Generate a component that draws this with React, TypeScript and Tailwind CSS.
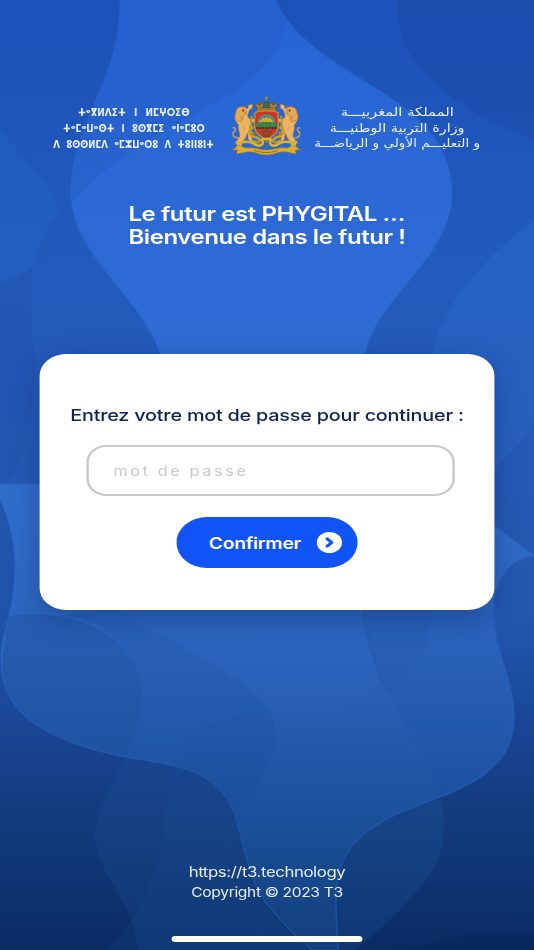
import { ChevronRight } from 'lucide-react';

const tifinagh = [
  { text: 'ⵜⴰⴳⵍⴷⵉⵜ ⵏ ⵍⵎⵖⵔⵉⴱ', spacing: '[word-spacing:6px] scale-x-[0.71]' },
  { text: 'ⵜⴰⵎⴰⵡⴰⵙⵜ ⵏ ⵓⵙⴳⵎⵉ ⴰⵏⴰⵎⵓⵔ', spacing: '[word-spacing:5px] scale-x-[0.69]' },
  { text: 'ⴷ ⵓⵙⵙⵍⵎⴷ ⴰⵎⵣⵡⴰⵔⵓ ⴷ ⵜⵓⵏⵏⵓⵏⵜ', spacing: '[word-spacing:4px] scale-x-[0.68]' },
];

const arabic = [
  { text: 'المملكة المغربيـــة', size: 'text-[12.3px]' },
  { text: 'وزارة التربية الوطنيـــة', size: 'text-[12px]' },
  { text: 'و التعليـــم الأولي و الرياضـــة', size: 'text-[11.3px]' },
];

function Backdrop() {
  return (
    <svg viewBox="0 0 534 950" preserveAspectRatio="none" className="absolute inset-0 h-full w-full">
      <defs>
        <linearGradient id="deep" gradientUnits="userSpaceOnUse" x1="0" y1="0" x2="0" y2="950">
          <stop offset="0" stopColor="#1c52b9" />
          <stop offset="0.3" stopColor="#235abd" />
          <stop offset="0.55" stopColor="#2659b3" />
          <stop offset="0.65" stopColor="#2257b0" />
          <stop offset="0.78" stopColor="#184390" />
          <stop offset="0.9" stopColor="#103776" />
          <stop offset="1" stopColor="#092b63" />
        </linearGradient>
        <linearGradient id="light" gradientUnits="userSpaceOnUse" x1="0" y1="0" x2="0" y2="950">
          <stop offset="0" stopColor="#2664d6" />
          <stop offset="0.35" stopColor="#306cd4" />
          <stop offset="0.55" stopColor="#316cca" />
          <stop offset="0.68" stopColor="#2c65be" />
          <stop offset="0.8" stopColor="#2157a7" />
          <stop offset="0.9" stopColor="#184b91" />
          <stop offset="1" stopColor="#123e7c" />
        </linearGradient>
      </defs>
      <rect width="534" height="950" fill="url(#deep)" />

      {/* Upper left folds */}
      <path d="M0 130C30 165 61 195 62 225C60 252 30 273 0 284Z" fill="#2f6dd0" opacity="0.18" />
      <path d="M0 284C30 273 61 252 61 225V212C40 235 32 260 32 290C30 340 38 360 34 385C30 440 20 472 0 487Z" fill="#1e47a0" opacity="0.2" />

      {/* Upper right folds */}
      <path d="M397 0C396 50 425 82 470 110C490 122 515 132 534 141V0Z" fill="#1b47a6" opacity="0.42" />
      <path d="M534 220C500 245 470 275 452 305C434 335 430 355 430 380V470H494C510 450 530 440 534 418Z" fill="#3474d4" opacity="0.24" />

      {/* Central ribbon, behind the card and down to the bottom */}
      <path
        d="M120 0C121 80 72 120 71 190C70 260 150 300 162 362L100 484L0 484V500C14 530 18 560 12 600C8 625 0 640 1 665C3 715 50 742 125 757C180 766 205 768 228 800C245 830 244 880 270 908C285 927 300 940 312 950H338C337 930 336 915 336 895C337 840 375 820 440 797C490 778 515 755 514 715C512 675 494 650 493 610C494 580 510 557 534 556L494 525L364 362C369 300 453 260 452 192C450 90 315 85 275 0Z"
        fill="url(#light)"
        stroke="#2e69c8"
        strokeOpacity="0.45"
        strokeWidth="1.5"
      />
      <path d="M120 0H290C291 70 225 96 180 123C140 145 105 166 72 202C64 125 120 85 120 0Z" fill="#1f50b0" opacity="0.2" />
      <path d="M0 500C14 530 18 560 12 600L0 650Z" fill="#1c4c9c" opacity="0.3" />

      {/* Lower folds */}
      <path d="M8 616C75 607 142 635 142 697C142 715 133 735 125 757C50 742 3 715 2 665Z" fill="#1b4a96" opacity="0.36" />
      <path d="M115 609C160 640 235 665 270 712C220 715 185 730 174 766C155 760 135 758 125 757C133 735 142 715 142 697C142 650 100 617 60 615Z" fill="#1f50a4" opacity="0.26" />
      <path d="M115 609C160 640 235 665 272 712H290C360 707 430 690 430 609Z" fill="#2a60bd" opacity="0.3" />
      <path d="M272 712C220 715 185 730 174 766C205 768 223 790 236 820C250 790 275 765 275 735Z" fill="#1c4d9c" opacity="0.28" />
      <path d="M362 609C365 640 373 665 386 691C415 680 430 650 430 609Z" fill="#1f509f" opacity="0.26" />
      <path d="M362 609C370 685 420 740 440 797C490 778 515 755 514 715C512 675 494 650 493 609H430C430 650 415 680 386 691Z" fill="#1f4fa6" opacity="0.17" />
      <path d="M125 757C110 790 95 810 95 838C97 875 139 910 137 950H312C280 925 252 900 247 860C243 805 225 766 174 766Z" fill="#1e5296" opacity="0.26" />
      <path d="M169 766C165 820 165 880 120 935L104 950H312C250 905 250 860 242 830C228 780 205 768 169 766Z" fill="#1e5399" opacity="0.14" />
      <path d="M440 797C455 855 425 885 395 915C375 935 365 940 355 950H338C337 930 336 915 336 895C337 840 375 820 440 797Z" fill="#205da2" opacity="0.26" />
      <path d="M534 933C500 929 475 932 440 942C415 949 400 950 380 951H534Z" fill="#07265c" opacity="0.45" />
      <path d="M236 820C220 845 225 870 232 890C240 915 262 935 275 950" fill="none" stroke="#2159a5" strokeOpacity="0.25" />
    </svg>
  );
}

function Lion() {
  return (
    <g stroke="#8f6a34" strokeWidth="0.4" strokeLinejoin="round">
      <path d="M8 42C1 42 0 38 3 35C5 33 3 31 1 32" fill="none" stroke="#dfa34e" strokeWidth="1.3" />
      <path d="M4 17C2 21 4 26 7 29C6 34 9 37 8 41C5 44 4 48 6 51L11 52L10 47L14 42L16 37L17 44L21 46L20 39L18 32L20 27L25 25L26 22L18 23L16 20L18 14L21 12L21 8L17 9L16 13C13 9 7 10 5 14Z" fill="#ecb363" />
      <path d="M5 14C7 10 12 10 14 13L15 17L12 19L10 26L6 25L3 22L4 19Z" fill="#e6a754" />
      <path d="M12 15L15 17L13 19M9 20L11 24M11 30L14 34" fill="none" />
      <circle cx="11.6" cy="14.5" r="0.9" fill="#4b321f" stroke="none" />
    </g>
  );
}

function CoatOfArms() {
  return (
    <svg viewBox="0 0 70 60" preserveAspectRatio="none" className="h-[60px] w-[58px] shrink-0">
      <Lion />
      <g transform="translate(70 0) scale(-1 1)">
        <Lion />
      </g>

      {/* Crown */}
      <g stroke="#574a2f" strokeWidth="0.6">
        <path d="M35 0V5M33 2H37" stroke="#8f8a3a" strokeWidth="1.3" />
        <path d="M26 13C21 6 29 5 32 8L35 5L38 8C41 5 49 6 44 13Z" fill="#a98436" />
        <path d="M35 5C31 8 31 10 32 13H38C39 10 39 8 35 5Z" fill="#3f6754" />
        <path d="M25 12H45L43 16H27Z" fill="#b98d34" />
        <path d="M28 14H42" stroke="#a83533" strokeWidth="1.4" strokeDasharray="2 1.3" />
        <circle cx="28" cy="8" r="1.2" fill="#3d6f72" />
        <circle cx="42" cy="8" r="1.2" fill="#3d6f72" />
      </g>

      {/* Shield */}
      <path d="M21 20C17 23 22 27 19 31C17 35 21 37 23 38M49 20C53 23 48 27 51 31C53 35 49 37 47 38" fill="none" stroke="#b8922d" strokeWidth="2" />
      <path d="M23 17C28 14 42 14 47 17C45 22 49 27 46 34C45 39 39 41 35 44C31 41 25 39 24 34C21 27 25 22 23 17Z" fill="#cf3328" stroke="#b8912c" strokeWidth="1.4" />
      <path d="M26 28C26 15 44 15 44 28Z" fill="#5a8f86" />
      <path d="M28 27C29 20 41 20 42 27Z" fill="#e5b52f" />
      <path d="M32 26L29 22M34 25L33 20M36 25L37 20M38 26L41 22" stroke="#667d3d" strokeWidth="0.6" />
      <path d="M24 28C29 25 41 25 46 28L45 32H25Z" fill="#437f43" />
      <path d="M25 32H45" stroke="#293934" strokeWidth="2" strokeDasharray="2 1" />
      <path d="M35 33L36.3 36L40 36L37.2 38L38.2 41L35 39.3L31.8 41L32.8 38L30 36H33.7Z" fill="none" stroke="#3f5a2b" strokeWidth="1" />

      {/* Scrollwork and ribbon */}
      <g fill="none" stroke="#c99f24" strokeWidth="2.6">
        <path d="M22 31C15 34 18 40 24 41C31 43 29 49 21 45M48 31C55 34 52 40 46 41C39 43 41 49 49 45" />
        <path d="M4 46C9 48 16 43 23 48C28 52 33 48 31 45C28 43 34 42 35 44C36 42 42 43 39 45C37 48 42 52 47 48C54 43 61 48 66 46" stroke="#dcb12c" />
      </g>
      <path d="M1 54L7 49L14 52C24 51 28 54 35 54C42 54 46 51 56 52L63 49L69 54L64 54L65 58L55 56C47 55 43 59 35 59C27 59 23 55 15 56L5 58L6 54Z" fill="#dcae29" stroke="#99752c" strokeWidth="0.6" />
      <path d="M23 54.5L29 56L35 56.6L41 56L47 54.5" fill="none" stroke="#665024" strokeWidth="1" strokeDasharray="1.5 0.7" />
      <path d="M20 38L24 39M50 38L46 39M28 45L26 47M42 45L44 47M35 44L33 47L35 51L37 47Z" fill="none" stroke="#6f6a3c" strokeWidth="0.8" />
    </svg>
  );
}

// The letter ya (ⴰ) is drawn as a small raised ring in this lettering
function TifinaghLine({ text, spacing }: { text: string; spacing: string }) {
  return (
    <p className={`h-4 whitespace-nowrap text-[10.5px] leading-4 ${spacing}`}>
      {Array.from(text).map((letter, i) =>
        letter === 'ⴰ' ? (
          <span key={i} className="align-[3px] text-[8.5px] leading-none">
            {letter}
          </span>
        ) : (
          letter
        ),
      )}
    </p>
  );
}

function MinistryHeader() {
  return (
    <header className="mt-[96px] flex h-[60px] w-full items-center pl-[30px] text-white/90">
      <div className="flex w-[163px] flex-col items-center pt-[3px] font-['DejaVu_Sans',sans-serif] font-bold">
        {tifinagh.map((line) => (
          <TifinaghLine key={line.text} {...line} />
        ))}
      </div>
      <CoatOfArms />
      <div dir="rtl" className="flex w-[160px] flex-col items-center pt-1 font-['DejaVu_Sans',sans-serif]">
        {arabic.map((line) => (
          <p key={line.text} className={`h-4 whitespace-nowrap leading-4 ${line.size}`}>
            {line.text}
          </p>
        ))}
      </div>
    </header>
  );
}

export default function App() {
  return (
    <div className="relative h-[950px] w-[534px] overflow-hidden bg-[#1c52b9]">
      <Backdrop />

      {/* Content is laid out on a 445px column and widened to fill the screen */}
      <div className="relative flex h-full w-[445px] origin-left scale-x-[1.2] flex-col items-center font-['Inter',sans-serif]">
        <MinistryHeader />

        <h1 className="mt-[47px] whitespace-nowrap text-[20px] font-semibold leading-[23px] tracking-[-0.35px] text-white">
          Le futur est PHYGITAL …
          <br />
          Bienvenue dans le futur !
        </h1>

        <main className="mt-[105px] flex h-[256px] w-[379px] shrink-0 flex-col items-center rounded-[22px] bg-white shadow-[0_8px_26px_rgba(15,40,100,0.4)]">
          <h2 className="mt-[49px] whitespace-nowrap text-[16.5px] font-medium leading-6 tracking-[-0.18px] text-[#0f2159]">
            Entrez votre mot de passe pour continuer :
          </h2>
          <input
            type="password"
            placeholder="mot de passe"
            className="ml-[5px] mt-[18px] h-[51px] w-[307px] shrink-0 rounded-[17px] border-2 border-[#c8c9cb] px-[21px] text-[13.5px] tracking-[2.2px] outline-none placeholder:text-[#c8c9cb]"
          />
          <button className="mt-[21px] flex h-[51px] w-[151px] shrink-0 items-center justify-between rounded-full bg-[#1154f5] pl-[27px] pr-[13px] text-white">
            <span className="text-[16px] font-semibold tracking-[-0.2px]">Confirmer</span>
            <span className="flex size-[21px] items-center justify-center rounded-full bg-white text-[#1154f5]">
              <ChevronRight size={15} strokeWidth={4.5} />
            </span>
          </button>
        </main>

        <footer className="mt-[252px] flex flex-col items-center whitespace-nowrap text-white/90">
          <p className="text-[14px] leading-5 tracking-[-0.35px]">https://t3.technology</p>
          <p className="text-[13px] leading-5 tracking-[-0.3px]">Copyright © 2023 T3</p>
        </footer>

        <div className="mt-[34px] h-[6px] w-[159px] shrink-0 rounded-full bg-white" />
      </div>
    </div>
  );
}
